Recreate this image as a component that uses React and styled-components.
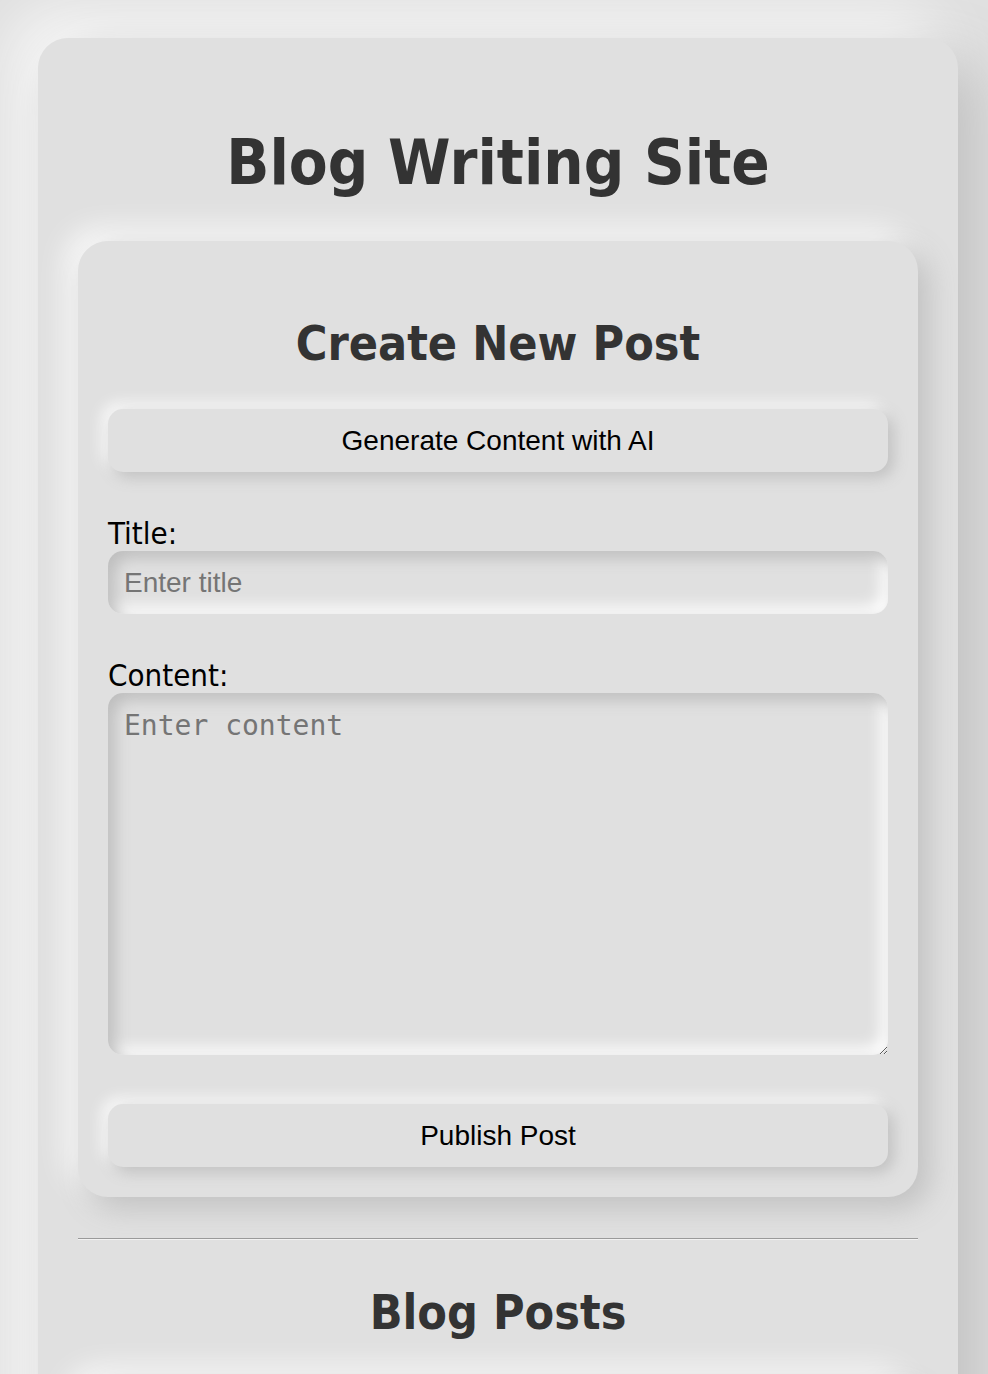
import React from "react";
import styled, { createGlobalStyle } from "styled-components";

const Global = createGlobalStyle`
  html, body {
    margin: 0;
    padding: 0;
    background: #e0e0e0;
  }
  body {
    font-family: "DejaVu Sans Condensed", "DejaVu Sans", sans-serif;
    font-stretch: condensed;
  }
  #root {
    padding: 38px 30px 60px 38px;
  }
`;

const Container = styled.div`
  background: #e0e0e0;
  border-radius: 30px;
  padding: 40px 40px 80px;
  box-shadow: 20px 20px 60px #bebebe, -20px -20px 60px #ffffff;
`;

const Title = styled.h1`
  margin: 48px 0 42px;
  text-align: center;
  font-size: 63px;
  font-weight: bold;
  color: #333;
  line-height: normal;
`;

const SubTitle = styled.h2`
  margin: ${(p) => p.$mt || 44}px 0 ${(p) => p.$mb || 38}px;
  text-align: center;
  font-size: 48px;
  font-weight: bold;
  color: #333;
  line-height: normal;
`;

const Card = styled.div`
  background: #e0e0e0;
  border-radius: 30px;
  padding: 30px;
  box-shadow: 10px 10px 30px #bebebe, -10px -10px 30px #ffffff;
`;

const Button = styled.button`
  display: block;
  width: 100%;
  height: 63px;
  border: none;
  border-radius: 15px;
  background: #e0e0e0;
  color: #000;
  font-family: "Liberation Sans", Arial, sans-serif;
  font-size: 28px;
  cursor: pointer;
  box-shadow: 5px 5px 15px #bebebe, -5px -5px 15px #ffffff;
  margin-top: ${(p) => p.$mt || 0}px;
`;

const Field = styled.div`
  margin-top: 43px;
`;

const Label = styled.label`
  display: block;
  font-size: 31px;
  color: #000;
  line-height: normal;
  margin-bottom: 0;
`;

const fieldBase = `
  display: block;
  width: 100%;
  box-sizing: border-box;
  border: none;
  outline: none;
  border-radius: 15px;
  background: #e0e0e0;
  color: #000;
  padding: 16px;
  box-shadow: inset 7px 7px 15px #bebebe, inset -7px -7px 15px #ffffff;
  &::placeholder { color: #757575; }
`;

const Input = styled.input`
  ${fieldBase}
  height: 63px;
  font-family: "Liberation Sans", Arial, sans-serif;
  font-size: 28px;
`;

const TextArea = styled.textarea`
  ${fieldBase}
  height: 362px;
  font-family: "DejaVu Sans Mono", monospace;
  font-size: 28px;
  line-height: normal;
  resize: vertical;
`;

const Divider = styled.hr`
  margin: 41px 0 0;
  border: none;
  border-top: 1px solid #9a9a9a;
  border-bottom: 1px solid #f2f2f2;
`;

const PostList = styled.div`
  display: flex;
  flex-direction: column;
  gap: 30px;
`;

const PostCard = styled.div`
  background: #e0e0e0;
  border-radius: 30px;
  min-height: 160px;
  box-shadow: 10px 10px 30px #bebebe, -10px -10px 30px #ffffff;
`;

export default function App() {
  return (
    <>
      <Global />
      <Container>
        <Title>Blog Writing Site</Title>
        <Card>
          <SubTitle>Create New Post</SubTitle>
          <Button type="button">Generate Content with AI</Button>
          <Field>
            <Label htmlFor="title">Title:</Label>
            <Input id="title" type="text" placeholder="Enter title" />
          </Field>
          <Field>
            <Label htmlFor="content">Content:</Label>
            <TextArea id="content" placeholder="Enter content" />
          </Field>
          <Button type="button" $mt={49}>Publish Post</Button>
        </Card>
        <Divider />
        <SubTitle $mt={44} $mb={40}>Blog Posts</SubTitle>
        <PostList>
          <PostCard />
        </PostList>
      </Container>
    </>
  );
}
